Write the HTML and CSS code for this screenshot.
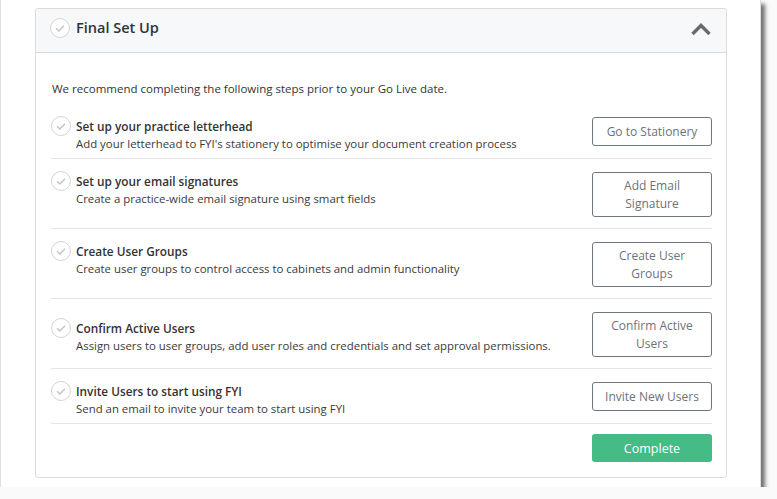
FILE: index.html
```html
<!DOCTYPE html>
<html lang="en">
<head>
  <meta charset="UTF-8">
  <meta name="viewport" content="width=device-width, initial-scale=1.0">
  <title>Final Set Up</title>
  <link rel="stylesheet" href="styles.css">
</head>
<body>
  <div class="window">
    <div class="panel">
      <div class="panel-header">
        <svg class="check" width="20" height="20" viewBox="0 0 20 20">
          <circle cx="10" cy="10" r="9.5" fill="#fff" stroke="#d4d4d4"/>
          <path d="M6 10.3l2.8 2.8 5.2-5.4" fill="none" stroke="#c4c4c4" stroke-width="1.4"/>
        </svg>
        <h3>Final Set Up</h3>
        <svg class="chevron" width="20" height="12" viewBox="0 0 20 12">
          <polyline points="1.5,11 10,2.5 18.5,11" fill="none" stroke="#6a6a6a" stroke-width="3.4"/>
        </svg>
      </div>

      <div class="panel-body">
        <p class="intro">We recommend completing the following steps prior to your Go Live date.</p>

        <div class="step">
          <div class="step-info">
            <svg class="check" width="20" height="20" viewBox="0 0 20 20">
              <circle cx="10" cy="10" r="9.5" fill="#fff" stroke="#d4d4d4"/>
              <path d="M6 10.3l2.8 2.8 5.2-5.4" fill="none" stroke="#c4c4c4" stroke-width="1.4"/>
            </svg>
            <div>
              <div class="step-title">Set up your practice letterhead</div>
              <div class="step-desc">Add your letterhead to FYI's stationery to optimise your document creation process</div>
            </div>
          </div>
          <button class="btn-outline">Go to Stationery</button>
        </div>

        <div class="step">
          <div class="step-info">
            <svg class="check" width="20" height="20" viewBox="0 0 20 20">
              <circle cx="10" cy="10" r="9.5" fill="#fff" stroke="#d4d4d4"/>
              <path d="M6 10.3l2.8 2.8 5.2-5.4" fill="none" stroke="#c4c4c4" stroke-width="1.4"/>
            </svg>
            <div>
              <div class="step-title">Set up your email signatures</div>
              <div class="step-desc">Create a practice-wide email signature using smart fields</div>
            </div>
          </div>
          <button class="btn-outline">Add Email Signature</button>
        </div>

        <div class="step">
          <div class="step-info">
            <svg class="check" width="20" height="20" viewBox="0 0 20 20">
              <circle cx="10" cy="10" r="9.5" fill="#fff" stroke="#d4d4d4"/>
              <path d="M6 10.3l2.8 2.8 5.2-5.4" fill="none" stroke="#c4c4c4" stroke-width="1.4"/>
            </svg>
            <div>
              <div class="step-title">Create User Groups</div>
              <div class="step-desc">Create user groups to control access to cabinets and admin functionality</div>
            </div>
          </div>
          <button class="btn-outline">Create User Groups</button>
        </div>

        <div class="step step-low">
          <div class="step-info">
            <svg class="check" width="20" height="20" viewBox="0 0 20 20">
              <circle cx="10" cy="10" r="9.5" fill="#fff" stroke="#d4d4d4"/>
              <path d="M6 10.3l2.8 2.8 5.2-5.4" fill="none" stroke="#c4c4c4" stroke-width="1.4"/>
            </svg>
            <div>
              <div class="step-title">Confirm Active Users</div>
              <div class="step-desc">Assign users to user groups, add user roles and credentials and set approval permissions.</div>
            </div>
          </div>
          <button class="btn-outline">Confirm Active Users</button>
        </div>

        <div class="step">
          <div class="step-info">
            <svg class="check" width="20" height="20" viewBox="0 0 20 20">
              <circle cx="10" cy="10" r="9.5" fill="#fff" stroke="#d4d4d4"/>
              <path d="M6 10.3l2.8 2.8 5.2-5.4" fill="none" stroke="#c4c4c4" stroke-width="1.4"/>
            </svg>
            <div>
              <div class="step-title">Invite Users to start using FYI</div>
              <div class="step-desc">Send an email to invite your team to start using FYI</div>
            </div>
          </div>
          <button class="btn-outline">Invite New Users</button>
        </div>

        <div class="panel-footer">
          <button class="btn-complete">Complete</button>
        </div>
      </div>
    </div>
  </div>
</body>
</html>
```

FILE: styles.css
```css
body {
  margin: 0;
  background-color: #fafafa;
  font-family: "Open Sans", "Noto Sans", Arial, sans-serif;
  color: #333;
}
.window {
  width: 761px;
  height: 487px;
  box-sizing: border-box;
  background-color: #fff;
  border-left: 1px solid #dedede;
  border-right: 1px solid #dedede;
  padding: 8px 0 0 34px;
  box-shadow: 4px 4px 4px rgba(0, 0, 0, 0.55);
}
.panel {
  width: 692px;
  height: 470px;
  box-sizing: border-box;
  border: 1px solid #dcdcdc;
  border-radius: 3px;
}
.panel-header {
  display: flex;
  align-items: center;
  height: 38px;
  padding: 0 15px 5px 14px;
  background-color: #f7f8fa;
  border-bottom: 1px solid #dcdcdc;
  border-radius: 3px 3px 0 0;
}
.panel-header h3 {
  flex: 1;
  margin: 0 0 1px 6px;
  font-size: 14.5px;
  font-weight: 600;
  color: #2f3338;
}
.chevron {
  margin-top: 2px;
}
.check {
  display: block;
  flex-shrink: 0;
}
.panel-body {
  padding: 27px 14px 0 15px;
}
.intro {
  margin: 0 0 6px 1px;
  font-size: 11.5px;
  line-height: 18px;
}
.step {
  display: flex;
  align-items: flex-start;
  padding: 13px 0 5px;
  border-bottom: 1px solid #e4e4e4;
}
.step-info {
  flex: 1;
  display: flex;
  align-items: flex-start;
  gap: 5px;
}
.step-info .check {
  margin-top: -1px;
}
.step-low .step-info {
  padding-top: 7px;
}
.step-title {
  font-size: 11.8px;
  font-weight: 600;
  line-height: 18px;
  color: #333;
}
.step-desc {
  font-size: 11.4px;
  line-height: 18px;
  color: #3a3a3a;
}
.btn-outline {
  width: 120px;
  min-height: 29px;
  margin-bottom: 6px;
  padding: 3.5px 9px;
  background-color: #fff;
  border: 1px solid #6f767d;
  border-radius: 3px;
  font-family: inherit;
  font-size: 12px;
  line-height: 18px;
  color: #6c737a;
}
.panel-footer {
  display: flex;
  justify-content: flex-end;
  padding-top: 10px;
}
.btn-complete {
  width: 120px;
  height: 28px;
  background-color: #45bb85;
  border: none;
  border-radius: 3px;
  font-family: inherit;
  font-size: 12.5px;
  color: #fff;
}
```
